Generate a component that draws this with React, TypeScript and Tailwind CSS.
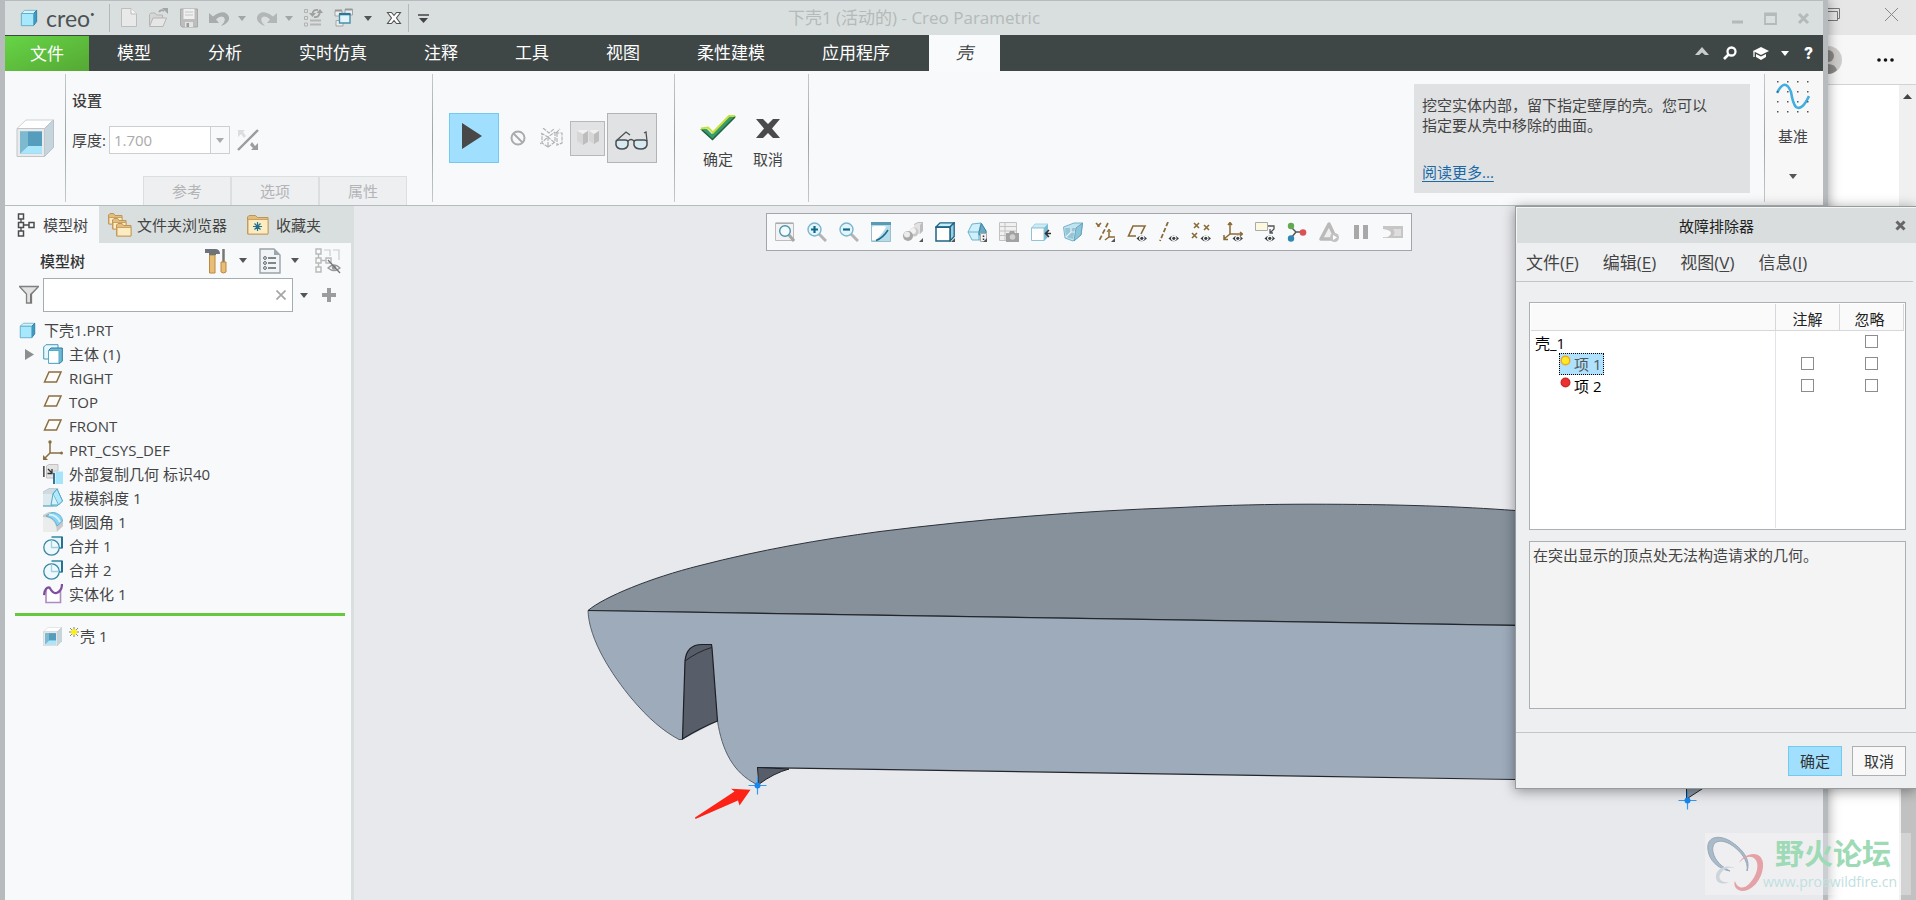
import React, { useState } from "react";
import type { ReactNode } from "react";

type IconProps = { children: ReactNode; box?: string; className?: string };

function Icon({ children, box = "0 0 20 20", className = "size-5" }: IconProps) {
  return (
    <svg viewBox={box} className={`shrink-0 ${className}`} fill="none" aria-hidden="true">
      {children}
    </svg>
  );
}

function Caret({ className = "text-[#555]" }: { className?: string }) {
  return (
    <svg viewBox="0 0 8 5" className={`h-[5px] w-2 shrink-0 ${className}`} aria-hidden="true">
      <path d="M0 0H8L4 5Z" fill="currentColor" />
    </svg>
  );
}

function Eye() {
  return (
    <g>
      <path d="M9.500 16.500Q14.500 10.500 20 16.500Q14.500 22 9.500 16.500Z" fill="#3a3f43" />
      <circle cx="14.800" cy="16.300" r="2.700" fill="#fff" />
      <circle cx="14.800" cy="16.300" r="1.600" fill="#3a3f43" />
    </g>
  );
}

/* ---------- title bar ---------- */

function CubeIcon({ className = "size-5" }: { className?: string }) {
  return (
    <Icon className={className}>
      <path d="M1.500 5L5 1.500H18.500L15 5Z" fill="#d5f4fd" stroke="#6fb4ce" />
      <path d="M15 5L18.500 1.500V14L15 18.500Z" fill="#3d9cc6" stroke="#2d7a9c" />
      <path d="M1.500 5H15V18.500H1.500Z" fill="#a8e8fd" stroke="#5aa9c6" />
    </Icon>
  );
}

function ToolButton({ label, children }: { label: string; children: ReactNode }) {
  return (
    <button type="button" aria-label={label} className="flex shrink-0 items-center justify-center">
      {children}
    </button>
  );
}

function TitleBar() {
  return (
    <header className="relative flex h-[34px] items-center bg-[#d9dfde]">
      <div className="flex items-center pl-[15px]">
        <CubeIcon className="size-[18px]" />
        <span className="ml-2 flex w-[51px] font-['Lato',sans-serif] text-[23px] leading-6 text-[#4d5256]">
          creo<span className="text-[8px] leading-4">•</span>
        </span>
      </div>
      <div className="mr-[9px] ml-3 h-7 w-px bg-[#b3b8b8]" />
      <div className="flex items-center">
        <ToolButton label="新建">
          <Icon>
            <path d="M2.500 .5H12L17.500 6V18.500H2.500Z" fill="#e9e9e9" stroke="#bdbdbd" />
            <path d="M12 .5V6H17.500" stroke="#bdbdbd" fill="#f6f6f6" />
          </Icon>
        </ToolButton>
        <span className="w-[9px]" />
        <ToolButton label="打开">
          <Icon>
            <path d="M1.500 17.500V6.500L3 5H7L8.500 7H14.500V10" stroke="#b5b5b5" fill="#d6d6d6" />
            <path d="M1.500 18.500L5 10H18.500L15 18.500Z" fill="#e6e6e6" stroke="#b5b5b5" />
            <path d="M11 4Q13 1 16 3" stroke="#a5a5a5" strokeWidth="1.800" />
            <path d="M14 0H20V6Z" fill="#a5a5a5" />
          </Icon>
        </ToolButton>
        <span className="w-[11px]" />
        <ToolButton label="保存">
          <Icon>
            <path d="M1.500 1H18.500V19H3L1.500 17.500Z" fill="#bdbdbd" stroke="#a9a9a9" />
            <path d="M4.500 1H15.500V11H4.500Z" fill="#efefef" />
            <path d="M6 4H14M6 7H14" stroke="#c6c6c6" />
            <path d="M6 14H14V19H6Z" fill="#e3e3e3" />
            <path d="M7.500 15H10V19H7.500Z" fill="#9b9b9b" />
          </Icon>
        </ToolButton>
        <span className="w-[10px]" />
        <ToolButton label="撤销">
          <Icon>
            <path d="M0 5V15H10L7 11.500Q11 7 14.500 9Q18 12 12 18Q21 15 20 9Q16 0 4 8.500Z" fill="#a9acac" />
          </Icon>
        </ToolButton>
        <span className="w-[9px]" />
        <Caret className="text-[#a2a5a5]" />
        <span className="w-[11px]" />
        <ToolButton label="重做">
          <Icon>
            <path d="M20 5V15H10L13 11.500Q9 7 5.500 9Q2 12 8 18Q-1 15 0 9Q4 0 16 8.500Z" fill="#b3b6b6" />
          </Icon>
        </ToolButton>
        <span className="w-2" />
        <Caret className="text-[#a2a5a5]" />
        <span className="w-[10px]" />
        <ToolButton label="重新生成">
          <Icon>
            <path d="M1.500 1.500h3v3h-3zM1.500 8.500h3v3h-3zM1.500 15h3v3h-3z" stroke="#b2b2b2" />
            <path d="M7 12.500H18M7 16.500H18" stroke="#b5b5b5" strokeWidth="1.800" />
            <path d="M15 2Q10 1 9.500 6M11 9Q16 10 17 4" stroke="#a0a0a0" strokeWidth="1.800" />
            <path d="M6 5H13L9.500 9ZM13.500 5H20L17 1Z" fill="#a0a0a0" />
          </Icon>
        </ToolButton>
        <span className="w-[11px]" />
        <ToolButton label="窗口">
          <Icon>
            <path d="M1 2.500H8V8H1ZM11 1.500H18.500V7H11ZM2 12.500H9V18H2Z" fill="#eee" stroke="#a4a4a4" />
            <path d="M1 2.500H8M11 1.500H18.500" stroke="#999" strokeWidth="2" />
            <path d="M5.500 6.500H16V15H5.500Z" fill="#e3f5fc" stroke="#4791ac" strokeWidth="1.400" />
            <path d="M5 6H16.500" stroke="#2c7896" strokeWidth="2.200" />
          </Icon>
        </ToolButton>
        <span className="w-[10px]" />
        <Caret />
        <span className="w-[14px]" />
        <ToolButton label="关闭">
          <Icon className="size-4" box="0 0 16 16">
            <path d="M1.500 2.500H5.500L8 5.500L10.500 2.500H14.500L10.500 8L14.500 13.500H10.500L8 10.500L5.500 13.500H1.500L5.500 8Z" fill="#fff" stroke="#555" strokeWidth="1.100" />
          </Icon>
        </ToolButton>
        <span className="w-[6px]" />
        <div className="h-7 w-px bg-[#b3b8b8]" />
        <span className="w-[9px]" />
        <ToolButton label="自定义">
          <Icon className="h-[9px] w-[11px]" box="0 0 11 9">
            <path d="M0 1H11" stroke="#444" strokeWidth="1.500" />
            <path d="M1 4H10L5.500 9Z" fill="#444" />
          </Icon>
        </ToolButton>
      </div>
      <h1 className="pointer-events-none absolute inset-x-0 text-center text-[17px] leading-6 text-[#b4b9b9]">
        下壳1 (活动的) - Creo Parametric
      </h1>
      <div className="ml-auto flex items-center gap-5 pr-[13px] text-[#b4b9b9]">
        <button type="button" aria-label="最小化">
          <Icon className="size-[13px]" box="0 0 13 13"><path d="M1 10H12" stroke="currentColor" strokeWidth="3" /></Icon>
        </button>
        <button type="button" aria-label="最大化">
          <Icon className="size-[13px]" box="0 0 13 13"><path d="M1 1.500H12V12H1ZM1 3H12" stroke="currentColor" strokeWidth="1.800" /></Icon>
        </button>
        <button type="button" aria-label="关闭窗口">
          <Icon className="size-[13px]" box="0 0 13 13"><path d="M2 2L11 11M11 2L2 11" stroke="currentColor" strokeWidth="3" /></Icon>
        </button>
      </div>
    </header>
  );
}

/* ---------- ribbon ---------- */

const menuTabs = ["模型", "分析", "实时仿真", "注释", "工具", "视图", "柔性建模", "应用程序"];

function TabBar() {
  return (
    <nav className="flex h-9 items-stretch bg-[#3e4646] text-[17px] leading-6 text-white">
      <button type="button" className="w-[84px] border-t border-[#3e4646] bg-linear-to-br from-[#66d546] to-[#55a834]">文件</button>
      <div className="flex gap-px">
        {menuTabs.map((t) => (
          <button type="button" key={t} className="px-7">{t}</button>
        ))}
      </div>
      <button type="button" className="ml-[11px] w-[71px] bg-[#f8fafb] text-[#444] italic">壳</button>
      <div className="ml-auto flex items-center pr-[10px]">
        <button type="button" aria-label="折叠功能区" className="mr-[14px] mb-1">
          <Icon className="h-[9px] w-[14px]" box="0 0 14 9"><path d="M0 8L7 0L14 8H10L7 5.500L4 8Z" fill="#c9cccc" /></Icon>
        </button>
        <button type="button" aria-label="搜索" className="mr-4">
          <Icon className="size-[14px]" box="0 0 14 14">
            <circle cx="8.500" cy="5.500" r="4" stroke="#fff" strokeWidth="2.300" /><path d="M5.500 8.500L1 13" stroke="#fff" strokeWidth="2.600" />
          </Icon>
        </button>
        <button type="button" aria-label="学习" className="mr-3">
          <Icon className="h-[13px] w-4" box="0 0 16 13">
            <path d="M0 4L8 0L16 4L8 8Z" fill="#fff" /><path d="M3 7L8 9.500L13 7V10L8 13L3 10Z" fill="#fff" /><path d="M1 4V10" stroke="#fff" strokeWidth="1.300" />
          </Icon>
        </button>
        <Caret className="mr-[15px] text-white" />
        <button type="button" aria-label="帮助" className="font-['Roboto',sans-serif] text-[17px] font-black">?</button>
      </div>
    </nav>
  );
}

function Divider() {
  return <div className="my-[3px] w-px shrink-0 bg-linear-to-b from-[#c5c9c9] via-[#9da3a3] to-[#c5c9c9]" />;
}

function ShellIcon({ className }: { className: string }) {
  return (
    <Icon className={className} box="0 0 38 38">
      <path d="M1 9.500L10 1H37.500L28.500 9.500Z" fill="#fff" stroke="#cfd2d4" />
      <path d="M28.500 9.500L37.500 1V28.500L28.500 37.500Z" fill="#c5d5de" stroke="#b9c2c8" />
      <path d="M1 9.500H28.500V37.500H1Z" fill="#e8eaeb" stroke="#c3c6c8" />
      <path d="M4 12.500H26V34.500H4Z" fill="#76b4cc" />
      <path d="M12 12.500H26V27H12Z" fill="#559dbc" />
      <path d="M12 27H26V34.500H4Z" fill="#a8e6fb" />
      <path d="M4 12.500L12 12.500V27L4 34.500Z" fill="#7db9cf" />
    </Icon>
  );
}

function Ribbon() {
  const [thickness, setThickness] = useState("1.700");
  return (
    <section className="flex h-[135px] border-b border-[#b5bcbc] bg-[#f8f9fb] text-[15px] leading-5 text-[#444]">
      <div className="flex w-[60px] items-center justify-center">
        <ShellIcon className="size-[38px]" />
      </div>
      <Divider />
      <div className="flex w-[366px] flex-col pt-[19px]">
        <h2 className="pl-[6px] font-medium text-[#3c3c3c]">设置</h2>
        <div className="mt-4 flex items-center pl-[6px]">
          <label htmlFor="thickness">厚度:</label>
          <div className="ml-[3px] flex h-7 border border-[#cdd0d1] bg-white">
            <input id="thickness" value={thickness} onChange={(e) => setThickness(e.target.value)} className="w-[100px] px-1 text-[#aaa] outline-none" />
            <button type="button" aria-label="厚度列表" className="flex w-[19px] items-center justify-center border-l border-[#cdd0d1] bg-[#f8f9fb]">
              <Caret className="text-[#aaa]" />
            </button>
          </div>
          <button type="button" aria-label="反向" className="ml-[7px]">
            <Icon className="size-[22px]" box="0 0 22 22">
              <path d="M1 21L21 1" stroke="#9c9c9c" strokeWidth="2.400" />
              <path d="M1 1H8L6 3L9 7L7 9L4 5L1 8Z" fill="#ddd" />
              <path d="M21 21H14L16 19L13 16L15 13L18 17L21 14Z" fill="#9c9c9c" />
            </Icon>
          </button>
        </div>
        <div className="mt-auto ml-[77px] flex text-[#b2b4b6]">
          {["参考", "选项", "属性"].map((t) => (
            <button type="button" key={t} className="h-[29px] w-[88px] border border-b-0 border-[#dcdfe0] bg-[#eeeff1] text-[15px] leading-5">{t}</button>
          ))}
        </div>
      </div>
      <Divider />
      <div className="flex w-[241px] items-center pl-4">
        <button type="button" aria-label="继续" className="flex size-[50px] items-center justify-center border border-[#74c9f3] bg-[#a0dffe] pr-1 pb-1">
          <Icon className="h-7 w-[22px]" box="0 0 22 28"><path d="M1 1L21 14L1 27Z" fill="#484848" /></Icon>
        </button>
        <button type="button" aria-label="无预览" className="ml-[11px]">
          <Icon className="size-4" box="0 0 16 16"><circle cx="8" cy="8" r="6.500" stroke="#ababab" strokeWidth="2" /><path d="M3.500 3.500L12.500 12.500" stroke="#ababab" strokeWidth="2" /></Icon>
        </button>
        <button type="button" aria-label="分离预览" className="ml-[14px]">
          <Icon className="h-5 w-6" box="0 0 24 20">
            <path d="M1 5L8 9L15 4M8 9V19L2 15V5M8 9M15 4V14L8 19M17 5L17 17L22 15V5L17 5M3 0L9 5L14 1M16 5L20 1M0 16L8 9L15 15" stroke="#b3b3b3" strokeWidth="1.200" strokeDasharray="4 1" />
          </Icon>
        </button>
        <button type="button" aria-label="连接预览" className="ml-[6px] flex size-[35px] items-center justify-center border border-[#b6b8b9] bg-[#e1e2e3]">
          <Icon className="h-5 w-6" box="0 0 24 20">
            <path d="M7 6L12 3V14L7 17ZM18 6L23 3V13L18 16Z" fill="#bdbdbd" />
            <path d="M1 3L4 2H12L7 6ZM13 3L16 2H23L18 6Z" fill="#f0f0f0" />
            <path d="M1 3L7 6V17L1 13ZM13 3L18 6V16L13 13Z" fill="#d6d6d6" />
          </Icon>
        </button>
        <button type="button" aria-label="几何预览" className="ml-[2px] flex size-[50px] items-center justify-center border border-[#b1b3b4] bg-[#e1e2e3] pt-1">
          <Icon className="h-[19px] w-[34px]" box="0 0 34 19">
            <path d="M1 11Q1 9 4 9H10Q13 9 13 11V14Q12 18 7 18Q2 18 1 14ZM19 11Q19 9 22 9H29Q32 9 32 11V14Q31 18 26 18Q20 18 19 14Z" fill="#d8eaf1" stroke="#4b4f52" strokeWidth="1.500" />
            <path d="M13 10Q16 7 19 10M1 10L11 1L15 4M32 10L31 1L29 2" stroke="#4b4f52" strokeWidth="1.300" />
          </Icon>
        </button>
      </div>
      <Divider />
      <div className="flex w-[133px] justify-center gap-[17px] pt-11">
        <button type="button" className="flex w-9 flex-col items-center gap-2 whitespace-nowrap">
          <Icon className="h-[26px] w-9" box="0 0 36 26">
            <path d="M0 14H7L12 19L29 1H36L12.500 25Z" fill="#3a9a68" />
            <path d="M1 13.500L8 12.500L13 17.500L29 1H35" stroke="#c6e23a" strokeWidth="2" />
            <path d="M35 2L12.500 24.500L2 15" stroke="#1f6340" strokeWidth="1.500" />
          </Icon>
          确定
        </button>
        <button type="button" className="flex flex-col items-center gap-2 whitespace-nowrap">
          <Icon className="h-[26px] w-[26px]" box="0 0 26 26">
            <path d="M1 4H8L13 9L18 4H25L17 13.500L25 23H18L13 18L8 23H1L9 13.500Z" fill="#4a4a4a" />
          </Icon>
          取消
        </button>
      </div>
      <Divider />
      <div className="flex flex-1 justify-end py-[13px] pr-[14px]">
        <div className="flex h-[109px] w-[336px] flex-col bg-[#dfe1e2] px-2 py-[11px]">
          <p className="w-[290px]">挖空实体内部，留下指定壁厚的壳。您可以指定要从壳中移除的曲面。</p>
          <a href="#more" className="mt-auto self-start text-[#1c69a8] underline underline-offset-3">阅读更多...</a>
        </div>
      </div>
      <Divider />
      <button type="button" className="flex w-[58px] flex-col items-center bg-[#f7f7f8] pt-[9px] pr-[2px]">
        <Icon className="size-[34px]" box="0 0 34 34">
          <path d="M1 13Q9 -3 15 12Q17 24 20 27Q26 31 33 16" stroke="#42aee0" strokeWidth="2.600" />
          {[1.5, 11.5, 21.5, 31.5].map((y) =>
            [1.5, 11.5, 21.5, 31.5].map((x) => <rect key={`${x}-${y}`} x={x - 0.5} y={y - 0.5} width="1.500" height="1.500" fill="#555" />)
          )}
        </Icon>
        <span className="mt-3 mb-7">基准</span>
        <Caret />
      </button>
    </section>
  );
}

/* ---------- model tree ---------- */

function FolderShape({ x, y, w, h }: { x: number; y: number; w: number; h: number }) {
  return (
    <g transform={`translate(${x} ${y})`}>
      <path d={`M0.500 2L2 0.500H${w * 0.4}L${w * 0.5} 2.500H${w}V${h}H0.500Z`} fill="#e3bd7e" stroke="#bd9557" />
      <path d={`M1 4.500H${w}V${h}H1Z`} fill="#fdebc2" stroke="#c9a264" />
    </g>
  );
}

function PlaneIcon() {
  return <Icon><path d="M1.500 14L6 4H18L13.500 14Z" stroke="#8a6f43" strokeWidth="1.500" fill="#fdfcfa" /></Icon>;
}

function MergeIcon() {
  return (
    <Icon>
      <path d="M8.500 1H19V12H16" stroke="#3a87a5" strokeWidth="1.400" fill="#e4f5fb" />
      <path d="M19 1V12" stroke="#1f6c8b" strokeWidth="1.800" />
      <circle cx="8.500" cy="11.500" r="7.700" stroke="#3a87a5" strokeWidth="1.300" fill="#eef9fd" />
      <path d="M8.500 4V11.500H16" stroke="#a6cfde" strokeWidth="1.300" />
    </Icon>
  );
}

const treeRows: { label: string; icon: ReactNode; expandable?: boolean }[] = [
  {
    label: "主体 (1)",
    expandable: true,
    icon: (
      <Icon>
        <path d="M.7 3L3 .7H15V13L13 15H.7Z" fill="#e4f7fd" stroke="#4a97b5" />
        <path d="M6 6L8 4H19.300V17L17 19.300H6Z" fill="#6db9d8" stroke="#2a7b9e" />
        <path d="M5.500 6.500H16V19.300H5.500Z" fill="#fff" stroke="#5aa9c6" />
      </Icon>
    ),
  },
  { label: "RIGHT", icon: <PlaneIcon /> },
  { label: "TOP", icon: <PlaneIcon /> },
  { label: "FRONT", icon: <PlaneIcon /> },
  {
    label: "PRT_CSYS_DEF",
    icon: (
      <Icon>
        <path d="M7 2V13H19M7 13L1 19" stroke="#8a6f43" strokeWidth="1.500" />
        <circle cx="7" cy="2" r="1.700" fill="#8a6f43" /><circle cx="18.500" cy="13" r="1.500" fill="#8a6f43" /><path d="M0 20V15L5 20Z" fill="#8a6f43" />
      </Icon>
    ),
  },
  {
    label: "外部复制几何 标识40",
    icon: (
      <Icon>
        <path d="M0.800 2V13" stroke="#555" strokeWidth="1.800" />
        <path d="M3.500 2L6 .5H15V7H11V14H3.500Z" fill="#e4e4e4" stroke="#c2c2c2" />
        <path d="M5 5L9 9M9 5V9.500H4.500" stroke="#333" strokeWidth="1.300" />
        <path d="M11 9V20" stroke="#246a88" strokeWidth="1.800" /><path d="M12.500 7.500H20V20H12.500Z" fill="#a6e4fb" />
      </Icon>
    ),
  },
  {
    label: "拔模斜度 1",
    icon: (
      <Icon>
        <path d="M0 4L6 .5H15L10 18H0Z" fill="#cfdbe0" stroke="#c0cdd3" />
        <path d="M0 6H10V17H0Z" fill="#dce9ee" />
        <path d="M10 6L14 1L19.500 13L14 18H0" stroke="#50a8c9" />
        <path d="M10 6L14 1L19.500 13L15.500 17Z" fill="#b2e9fc" stroke="#50a8c9" />
        <path d="M10 6L8 17H15" stroke="#50a8c9" fill="#d6f3fc" />
      </Icon>
    ),
  },
  {
    label: "倒圆角 1",
    icon: (
      <Icon>
        <path d="M0 3L6 0H12L20 8V14L14 20H0Z" fill="#c8cacb" />
        <path d="M0 5Q13 5 14 20H0Z" fill="#ebecec" />
        <path d="M3 4L9 0.500Q19 1 19.500 9L14 14Q12 6 3 4Z" fill="#85d4f5" stroke="#5aa9c9" strokeWidth=".8" />
        <path d="M6 2.500Q14 3 17 10" stroke="#d4f3fd" strokeWidth="2" />
      </Icon>
    ),
  },
  { label: "合并 1", icon: <MergeIcon /> },
  { label: "合并 2", icon: <MergeIcon /> },
  {
    label: "实体化 1",
    icon: (
      <Icon>
        <path d="M3 6V18.500H17.500V7" stroke="#b08bc0" strokeWidth="1.600" fill="#fff" />
        <path d="M1 11Q2 3 6.500 3.500Q10 10 13.500 9Q19 7 19 0" stroke="#7f4e9d" strokeWidth="2.200" />
      </Icon>
    ),
  },
];

function SidePanel() {
  const [query, setQuery] = useState("");
  return (
    <aside className="w-[349px] shrink-0 border-r-3 border-[#d9dfde] bg-[#f7f9fb] text-[15px] leading-6 text-[#444]">
      <div className="flex h-[37px] items-stretch bg-[#d9dfde]">
        <button type="button" className="flex w-[94px] items-center bg-[#f7f9fb] pl-3">
          <Icon className="h-6 w-[18px]" box="0 0 18 24">
            <path d="M1.500 1H6.500V6H1.500ZM1.500 9.500H6.500V14.500H1.500ZM1.500 18H6.500V23H1.500ZM12 9.500H17V14.500H12Z" stroke="#4c4c4c" strokeWidth="1.500" />
            <path d="M4 6V9.500M4 14.500V18M6.500 12H12" stroke="#4c4c4c" strokeWidth="1.300" />
          </Icon>
          <span className="ml-2">模型树</span>
        </button>
        <button type="button" className="ml-[9px] flex items-center gap-[5px]">
          <Icon className="size-6" box="0 0 24 24">
            <FolderShape x={0} y={0} w={14} h={11} /><FolderShape x={4} y={5} w={14} h={11} /><FolderShape x={8} y={10} w={15} h={13} />
          </Icon>
          文件夹浏览器
        </button>
        <button type="button" className="ml-5 flex items-center gap-[7px]">
          <Icon className="h-5 w-[22px]" box="0 0 22 20">
            <FolderShape x={0} y={0} w={21} h={19} />
            <path d="M10.500 7V16M6 11.500H15M7.500 8.500L13.500 14.500M13.500 8.500L7.500 14.500" stroke="#1f6f8f" strokeWidth="1.200" />
          </Icon>
          收藏夹
        </button>
      </div>
      <div className="flex h-[35px] items-center pl-[35px]">
        <h2 className="font-medium text-[#333]">模型树</h2>
        <div className="ml-auto flex items-center pr-[10px]">
          <ToolButton label="设置">
            <Icon className="h-[26px] w-[22px]" box="0 0 22 26">
              <path d="M4.500 7H10V25H4.500Z" fill="#e9bd74" stroke="#b98842" />
              <path d="M0 1H10Q15 1 15 6H11V7H4V5H0Z" fill="#6d7379" />
              <path d="M18.500 1V14" stroke="#777" strokeWidth="2.500" /><path d="M16 14H21V24Q18.500 26 16 24Z" fill="#e9bd74" stroke="#b98842" />
            </Icon>
          </ToolButton>
          <span className="w-3" /><Caret /><span className="w-3" />
          <ToolButton label="显示">
            <Icon className="h-[26px] w-[22px]" box="0 0 22 26">
              <path d="M1 1H15L21 7V25H1Z" fill="#f0f4f6" stroke="#9aa3a8" strokeWidth="1.400" /><path d="M15 1V7H21" fill="#9ba7ae" />
              <path d="M9 10H17M9 15H17M9 20H17" stroke="#5b6368" strokeWidth="1.500" />
              <circle cx="6" cy="10" r="1.400" stroke="#5b6368" /><circle cx="6" cy="15" r="1.400" stroke="#5b6368" /><circle cx="6" cy="20" r="1.400" stroke="#5b6368" />
            </Icon>
          </ToolButton>
          <span className="w-[10px]" /><Caret /><span className="w-4" />
          <ToolButton label="隐藏列">
            <Icon className="size-[26px]" box="0 0 26 26">
              <path d="M1 1H6V6H1ZM1 10H6V15H1ZM1 19H6V24H1ZM11 10H16V15H11ZM3.500 6V10M3.500 15V19M6 12.500H11" stroke="#b9b9b9" strokeWidth="1.400" />
              <path d="M9 2H15V8M18 2H24V12" stroke="#ccc" strokeWidth="1.200" />
              <path d="M13 20Q19 14 25 20Q19 25 13 20Z" stroke="#999" strokeWidth="1.300" /><circle cx="19" cy="19.500" r="2.200" fill="#999" /><path d="M13 12L25 25" stroke="#777" strokeWidth="1.300" />
            </Icon>
          </ToolButton>
        </div>
      </div>
      <div className="flex items-center pl-[14px]">
        <Icon className="size-5">
          <path d="M0.500 1.500H19.500L12.500 9V18H7.500V9Z" fill="#e2e2e2" stroke="#808080" strokeWidth="1.300" /><path d="M11 9L19 2L12.500 9V18H11Z" fill="#777" />
        </Icon>
        <div className="ml-1 flex h-[34px] w-[250px] items-center border border-[#a3afaf] bg-white">
          <input aria-label="搜索模型树" value={query} onChange={(e) => setQuery(e.target.value)} className="min-w-0 flex-1 px-2 outline-none" />
          <button type="button" aria-label="清除" onClick={() => setQuery("")} className="mr-[6px]">
            <Icon className="size-[10px]" box="0 0 10 10"><path d="M.5 .5L9.500 9.500M9.500 .5L.5 9.500" stroke="#a5a5a5" strokeWidth="1.700" /></Icon>
          </button>
        </div>
        <Caret className="ml-[7px] text-[#555]" />
        <button type="button" aria-label="添加" className="ml-[14px]">
          <Icon className="size-[14px]" box="0 0 14 14"><path d="M7 0V14M0 7H14" stroke="#9a9c9d" strokeWidth="4" /></Icon>
        </button>
      </div>
      <div className="mt-[6px] flex h-6 items-center pl-[14px]">
        <CubeIcon className="size-[17px]" />
        <span className="ml-2">下壳1.PRT</span>
      </div>
      <ul>
        {treeRows.map((r) => (
          <li key={r.label} className="flex h-6 items-center pl-[18px]">
            <span className="flex w-5 items-center pl-[2px]">
              {r.expandable && (
                <button type="button" aria-label="展开">
                  <Icon className="h-[11px] w-[9px]" box="0 0 9 11"><path d="M0 0L9 5.500L0 11Z" fill="#8e8e8e" /></Icon>
                </button>
              )}
            </span>
            {r.icon}
            <span className="ml-[6px]">{r.label}</span>
          </li>
        ))}
      </ul>
      <div className="mt-[7px] mr-[6px] ml-[10px] h-[3px] bg-[#66c83d]" />
      <div className="mt-2 flex h-6 items-center pl-[38px]">
        <ShellIcon className="size-[19px]" />
        <Icon className="mb-2 ml-[7px] size-[10px]" box="0 0 10 10">
          <path d="M5 0V10M0 5H10M1 1L9 9M9 1L1 9" stroke="#666" strokeWidth=".8" /><circle cx="5" cy="5" r="3" fill="#fbee1c" />
        </Icon>
        <span className="ml-px">壳 1</span>
      </div>
    </aside>
  );
}

/* ---------- graphics toolbar ---------- */

const corner = <path d="M20 16V20H16Z" fill="#555" />;
const brown = "#8a6a35";

const viewTools: [string, ReactNode][] = [
  ["重新调整", <><path d="M.5 1.500H18.500V18.500H.5Z" fill="#f2f2f2" stroke="#bcbcbc" /><path d="M.5 1H18.500" stroke="#999" /><path d="M14 13L19 19" stroke="#a7a7a7" strokeWidth="3" /><circle cx="10" cy="9" r="5.300" fill="#f3fbfe" stroke="#4b93ae" strokeWidth="1.400" /></>],
  ["放大", <><path d="M12 12L19 19" stroke="#b5b5b5" strokeWidth="3" /><circle cx="7.500" cy="7.500" r="6.500" fill="#e3f5fc" stroke="#79b6cd" strokeWidth="1.400" /><path d="M7.500 4V11M4 7.500H11" stroke="#15678a" strokeWidth="2.200" /></>],
  ["缩小", <><path d="M12 12L19 19" stroke="#b5b5b5" strokeWidth="3" /><circle cx="7.500" cy="7.500" r="6.500" fill="#e3f5fc" stroke="#79b6cd" strokeWidth="1.400" /><path d="M4 7.500H11" stroke="#15678a" strokeWidth="2.200" /></>],
  ["重画", <><path d="M.5 .5H19.500V19.500H.5Z" fill="#b4dcea" stroke="#9dbfcc" /><path d="M0 0H20V3H0Z" fill="#5a9ab3" /><path d="M1 5H15Q12 11 5 18H1Z" fill="#fff" /><path d="M3 4H17Q9 5 1 9V5Z" fill="#fff" /><path d="M5 18.500Q12 16 17 8" stroke="#216b8a" strokeWidth="1.500" /></>],
  ["渲染", <><path d="M11 2L15 0H20V9L17 12H11Z" fill="#bdbdbd" /><path d="M11 3L15 1H19L17 3V12H11Z" fill="#e2e2e2" /><circle cx="11" cy="10" r="4.500" fill="#c9c9c9" /><circle cx="10" cy="9" r="3" fill="#f1f1f1" /><circle cx="5" cy="14" r="5" fill="#a9a9a9" /><circle cx="4" cy="12.500" r="3" fill="#ececec" />{corner}</>],
  ["显示样式", <><path d="M1 5L5 .8H19.200L15 5Z" fill="#c4ecfa" stroke="#1f6484" strokeWidth="1.300" /><path d="M15 5L19.200 .8V14.500L15 19Z" fill="#9ccfe2" stroke="#1f6484" strokeWidth="1.300" /><path d="M1 5.200H15V19H1Z" fill="#fff" stroke="#1f6484" strokeWidth="1.500" />{corner}</>],
  ["已保存方向", <><path d="M1 10L5 2L14 1L19 9V16L15 18H5Z" fill="#cfeffb" stroke="#6db3cd" /><path d="M1 10H12V18M12 10L14 1" stroke="#6db3cd" strokeWidth="1.200" /><path d="M12 10L14.500 1.500L19 9V13H12Z" fill="#6aa9c2" stroke="#3c88a6" /><path d="M13.500 11.500H19.500V19.500H13.500Z" fill="#f4f4f4" stroke="#aaa" /><path d="M16.500 13.500V15M16.500 16.500V18" stroke="#333" strokeWidth="1.500" />{corner}</>],
  ["视图管理器", <><path d="M.5 .5H17.500V18.500H.5ZM.5 4.500H17.500M.5 9H17.500M.5 13.500H17.500M6 .5V18.500" stroke="#c2c2c2" fill="#f0f0f0" /><path d="M7 11H10L11 9H15L16 11H20V20H7Z" fill="#a2a2a2" /><circle cx="13.500" cy="15" r="2.800" fill="#d0d0d0" /></>],
  ["截面", <><path d="M.5 6L4 2H17L13 6Z" fill="#cdebf5" stroke="#a5d4e4" /><path d="M13 6L17 2V15L13 19Z" fill="#78bcd6" /><path d="M.5 6H13V18.500H.5Z" fill="#fff" stroke="#8fc4d6" /><path d="M20 11.500H15M18 8L14.500 11.500L18 15" stroke="#333" strokeWidth="1.600" /></>],
  ["透视图", <><path d="M.5 5L11 1H19.500L18 13L10 19L2 16Z" fill="#bfe3f0" stroke="#76b3ca" /><path d="M13 6L19.500 1L18 13L11 19Z" fill="#8cc5da" stroke="#5b9cb6" strokeWidth=".8" /><path d="M2 6H12L10 17L3 15Z" fill="#98c4d4" /><path d="M3 15L8 10H12M8 10V6" stroke="#e3f4fa" strokeWidth="1.200" /></>],
  ["基准显示过滤器", <><path d="M1 1L6 6M6 1L1 6M13 1L4 19" stroke={brown} strokeWidth="1.700" strokeDasharray="5 2" /><path d="M14 8V15H20M14 15L10 18" stroke={brown} strokeWidth="1.500" /><path d="M12 10L14 7L16 10" stroke={brown} />{corner}</>],
  ["平面显示", <><path d="M9 14H1.500L6 4H18L14 12" stroke={brown} strokeWidth="1.600" /><Eye /></>],
  ["轴显示", <><path d="M9 0L1 19" stroke={brown} strokeWidth="1.800" strokeDasharray="4.500 2" /><Eye /></>],
  ["点显示", <><path d="M3 1L8 6M8 1L3 6M13 3L18 8M18 3L13 8M1 11L6 16M6 11L1 16" stroke={brown} strokeWidth="1.600" /><Eye /></>],
  ["坐标系显示", <><path d="M7 1V12H19M7 12L1 17M5 3L7 .5L9 3M17 10L19.500 12L17 14M1 13V17.500H5" stroke={brown} strokeWidth="1.500" /><Eye /></>],
  ["注释显示", <><path d="M.5 .5H12.500V8.500H.5Z" fill="#fdf9df" stroke="#aaa" /><path d="M13 4H19V7L15 11M15 7V11H18" stroke="#555" strokeWidth="1.300" /><Eye /></>],
  ["旋转中心", <><path d="M4 5L9 10H16M9 10L4 16" stroke="#555" strokeWidth="1.400" /><circle cx="4" cy="4" r="3.200" fill="#62a94f" /><circle cx="16" cy="10.500" r="3.300" fill="#dc5252" /><circle cx="4" cy="16.500" r="3.200" fill="#2f88b3" /></>],
  ["仿真", <><path d="M10 2L2 17H17Z" stroke="#bababa" strokeWidth="3.500" strokeLinejoin="round" fill="#eee" /><circle cx="15.500" cy="15.500" r="4.500" fill="#c2c2c2" /><path d="M14 13L18 15.500L14 18Z" fill="#fff" /></>],
  ["暂停", <path d="M3 3H8V17H3ZM12 3H17V17H12Z" fill="#a8a8a8" />],
  ["停止", <><path d="M0 4H20V16H0V15Q7 16 8 11Q8 8 0 7Z" fill="#c6c6c6" /><path d="M10 7H18V14H10Q13 11 10 7Z" fill="#dedede" /></>],
];

function ViewToolbar() {
  return (
    <div className="relative mx-auto mt-[7px] flex h-[38px] w-fit items-center gap-3 border border-[#a3a5a8] bg-[#f8f9fb] px-2">
      {viewTools.map(([label, art]) => (
        <ToolButton key={label} label={label}><Icon>{art}</Icon></ToolButton>
      ))}
    </div>
  );
}

/* ---------- 3D model ---------- */

function Vertex({ x, y }: { x: number; y: number }) {
  return (
    <g transform={`translate(${x} ${y})`}>
      <path d="M-9 0H9M0 -9V9" stroke="#2f9bf3" strokeWidth="1.200" />
      <circle r="3" fill="#1787ee" />
    </g>
  );
}

function Model() {
  return (
    <svg viewBox="354 206 1469 694" preserveAspectRatio="xMinYMin slice" className="absolute inset-0 size-full" fill="none" role="img" aria-label="下壳1">
      <path d="M588 610.500C604 597 650 578 700 565.500C760 550 820 539.500 880 531.500C980 519 1080 511 1180 507.500C1230 505 1270 504.200 1310 504.200C1400 504.200 1460 506.500 1515 510.500L1700 524V628L1515 625.300Z" fill="#86919c" stroke="#2c3238" />
      <path d="M588 610.500C589 640 612 675 632 699C648 718 663 731 679 739.500H682.500L717.500 721C722 750 733 773 757 784.500V767.500L1700 782V628Z" fill="#9dabbb" />
      <path d="M588 610.500C589 640 612 675 632 699C648 718 663 731 679 739.500H682.500M717.500 721C722 750 733 773 757 784.500" stroke="#596169" />
      <path d="M588 610.500L1515 625.300M757 767.500L1515 779.500" stroke="#22262b" strokeWidth="1.200" />
      <path d="M682.500 739L685 661C686 650 691 644.500 702 644.500H711.500L712 648L717.500 721Q700 728 682.500 739Z" fill="#585e69" stroke="#1c1f24" strokeWidth="1.200" />
      <path d="M685 661Q697 652 711.500 647.500" stroke="#22262b" />
      <path d="M757.500 767.500L789 769Q774 773 758.500 784.500Z" fill="#585e69" stroke="#1c1f24" />
      <path d="M1686.500 780V799L1705 787V780Z" fill="#8c99a8" stroke="#22262b" />
      <Vertex x={757.5} y={785.5} />
      <Vertex x={1687.5} y={800.5} />
      <path d="M695 817.500L734.500 791.500L731 788.700L750.500 789.700L739.500 805.500L738 800.500L695.500 819Z" fill="#fd2216" />
    </svg>
  );
}

/* ---------- troubleshooter dialog ---------- */

const failures: { name: string; level: number; dot?: string; note: boolean; selected?: boolean }[] = [
  { name: "壳_1", level: 0, note: false },
  { name: "项 1", level: 1, dot: "yellow", note: true, selected: true },
  { name: "项 2", level: 1, dot: "red", note: true },
];

function Check({ label }: { label: string }) {
  return <input type="checkbox" aria-label={label} className="mx-auto block size-[13px] appearance-none border border-[#8c8c8c] bg-white checked:bg-[#4aa3c9]" />;
}

function Dialog() {
  return (
    <div role="dialog" aria-labelledby="dlg-title" className="absolute top-[206px] right-0 w-[401px] border-y border-l border-[#989b9d] bg-[#eeeff1] text-[15px] leading-5 text-[#333] shadow-[0_2px_12px_rgba(0,0,0,0.4)]">
      <div className="relative flex h-9 items-center justify-center border-t border-l border-[#f4f5f5] bg-[#d9dddd]">
        <h2 id="dlg-title" className="text-[#222]">故障排除器</h2>
        <button type="button" aria-label="关闭对话框" className="absolute right-[10px]">
          <Icon className="size-[11px]" box="0 0 11 11"><path d="M1.500 1.500L9.500 9.500M9.500 1.500L1.500 9.500" stroke="#666" strokeWidth="3" /></Icon>
        </button>
      </div>
      <div className="mr-[3px] flex h-[39px] items-center gap-6 border-b border-[#c3c6c8] pt-px pl-[10px] text-[17px] leading-6 text-[#444]">
        {[["文件", "F"], ["编辑", "E"], ["视图", "V"], ["信息", "I"]].map(([t, k]) => (
          <button type="button" key={k}>{t}(<span className="underline underline-offset-2">{k}</span>)</button>
        ))}
      </div>
      <div className="mt-5 mr-[10px] ml-[13px] h-[228px] border border-[#adb0b2] bg-white p-px">
        <table className="h-full w-full table-fixed border-collapse">
          <thead>
            <tr className="h-[26px] border-b border-[#d5d7d8] bg-[#fafafa] text-[#222]">
              <th aria-label="项" className="border-r border-[#d5d7d8] p-0" />
              <th className="w-16 border-r border-[#d5d7d8] p-0 pt-1 font-normal">注解</th>
              <th className="w-16 border-r border-[#d5d7d8] p-0 pt-1 pr-1 font-normal">忽略</th>
            </tr>
          </thead>
          <tbody className="text-black">
            {failures.map((f) => (
              <tr key={f.name} className="h-[22px]">
                <td className="border-r border-[#e2e4e5] p-0">
                  {f.level === 0 ? (
                    <span className="block pt-[3px] pl-1 leading-[19px]">{f.name}</span>
                  ) : (
                    <span className={f.selected ? "ml-7 flex h-[22px] w-[45px] border border-dotted border-black bg-[#aee2ff] text-[#555]" : "ml-7 flex h-[22px] w-[45px] border border-transparent"}>
                      <Icon className="mt-px size-[11px]" box="0 0 11 11">
                        <circle cx="5.500" cy="5.500" r="4.300" fill={f.dot === "yellow" ? "#fdea26" : "#ef2f30"} stroke={f.dot === "yellow" ? "#f3a521" : "#c72c2c"} strokeWidth="1.400" />
                      </Icon>
                      <span className="ml-[3px] whitespace-nowrap leading-[21px]">{f.name}</span>
                    </span>
                  )}
                </td>
                <td className="p-0">{f.note && <Check label={`注解 ${f.name}`} />}</td>
                <td className="p-0"><Check label={`忽略 ${f.name}`} /></td>
              </tr>
            ))}
            <tr><td className="border-r border-[#e2e4e5]" /><td /><td /></tr>
          </tbody>
        </table>
      </div>
      <textarea readOnly aria-label="说明" defaultValue="在突出显示的顶点处无法构造请求的几何。" className="mt-[11px] ml-[13px] block h-[168px] w-[377px] resize-none border border-[#adb0b2] bg-[#f4f4f4] px-[3px] py-[3px] text-[#444] outline-none" />
      <div className="mt-[23px] flex h-14 items-center justify-end gap-[10px] border-t border-[#c3c6c8] pr-[10px]">
        <button type="button" className="h-[30px] w-[54px] border border-[#74c9f3] bg-[#a0dffe]">确定</button>
        <button type="button" className="h-[30px] w-[54px] border border-[#adb0b2] bg-[#f8f8f9]">取消</button>
      </div>
    </div>
  );
}

/* ---------- window behind ---------- */

function BrowserStrip() {
  return (
    <div className="flex w-[88px] shrink-0 flex-col bg-white">
      <div className="flex h-[35px] items-start justify-between bg-[#e6e6e6] pr-[18px]">
        <Icon className="mt-2 h-[13px] w-3" box="0 0 12 13"><path d="M0 3.500H9.500V12.500H0M0 .5H11.500V10.500H9.500" stroke="#777" /></Icon>
        <Icon className="mt-2 size-[13px]" box="0 0 13 13"><path d="M0 0L13 13M13 0L0 13" stroke="#888" /></Icon>
      </div>
      <div className="flex h-[50px] items-center justify-between border-b border-[#d3d3d3] bg-[#f7f7f7] pr-[22px]">
        <Icon className="h-7 w-[14px]" box="0 0 14 28">
          <circle cx="0" cy="14" r="14" fill="#cfcdcb" /><circle cx="0" cy="10" r="6" fill="#8b8886" /><path d="M0 18Q7 18 9 24Q5 28 0 28Z" fill="#8b8886" />
        </Icon>
        <Icon className="h-1 w-[17px]" box="0 0 17 4"><circle cx="2" cy="2" r="1.800" fill="#111" /><circle cx="8.500" cy="2" r="1.800" fill="#111" /><circle cx="15" cy="2" r="1.800" fill="#111" /></Icon>
      </div>
      <div className="ml-auto flex w-[17px] flex-1 flex-col items-center bg-[#f0f0f0] pt-[9px]">
        <Icon className="h-[5px] w-[9px]" box="0 0 9 5"><path d="M0 5H9L4.500 0Z" fill="#444" /></Icon>
        <div className="mt-auto ml-[2px] h-[300px] w-[15px] bg-[#c1c1c1]" />
      </div>
    </div>
  );
}

function Watermark() {
  return (
    <div className="absolute right-[5px] bottom-[5px] flex h-[62px] w-[206px] bg-white/30">
      <svg viewBox="0 0 60 62" className="h-[62px] w-[60px] shrink-0" fill="none" aria-hidden="true">
        <path fillRule="evenodd" d="M3 17C1 4 13 1 25 8C38 16 46 27 42 38C44 28 35 17 25 11C14 5 6 9 8 19C10 28 17 34 25 38C13 36 4 27 3 17Z" fill="#a9bac8" stroke="#98a9b8" />
        <path d="M34 30C39 20 56 16 58 30C59 44 48 58 38 58C31 58 28 52 30 48C32 55 38 57 44 51C52 43 55 31 50 26C45 21 38 25 34 30Z" fill="#e4a1a6" />
        <path d="M31 36C22 30 11 36 11 43C10 51 19 52 24 49C16 50 12 45 16 40C20 34 27 34 31 36Z" fill="#cdd5dc" />
      </svg>
      <div className="flex flex-col">
        <span className="pl-[10px] text-[29px] leading-[42px] font-bold whitespace-nowrap text-[#9ddab5]">野火论坛</span>
        <span className="-ml-[2px] text-[14px] leading-[14px] whitespace-nowrap text-[#bfe0df]">www.proewildfire.cn</span>
      </div>
    </div>
  );
}

export default function App() {
  return (
    <div className="relative flex h-screen w-full overflow-hidden bg-white font-['Open_Sans','Noto_Sans_CJK_SC',sans-serif]">
      <div className="relative z-10 flex min-w-0 flex-1 flex-col border-x-5 border-t border-[#b7bbbe] shadow-[0_0_12px_rgba(0,0,0,0.4)]">
        <TitleBar />
        <TabBar />
        <Ribbon />
        <div className="flex min-h-0 flex-1">
          <SidePanel />
          <main className="relative min-w-0 flex-1 bg-[#e8e9ed]">
            <Model />
            <ViewToolbar />
          </main>
        </div>
      </div>
      <BrowserStrip />
      <div className="pointer-events-none absolute inset-0 z-20 *:pointer-events-auto">
        <Dialog />
        <Watermark />
      </div>
    </div>
  );
}
